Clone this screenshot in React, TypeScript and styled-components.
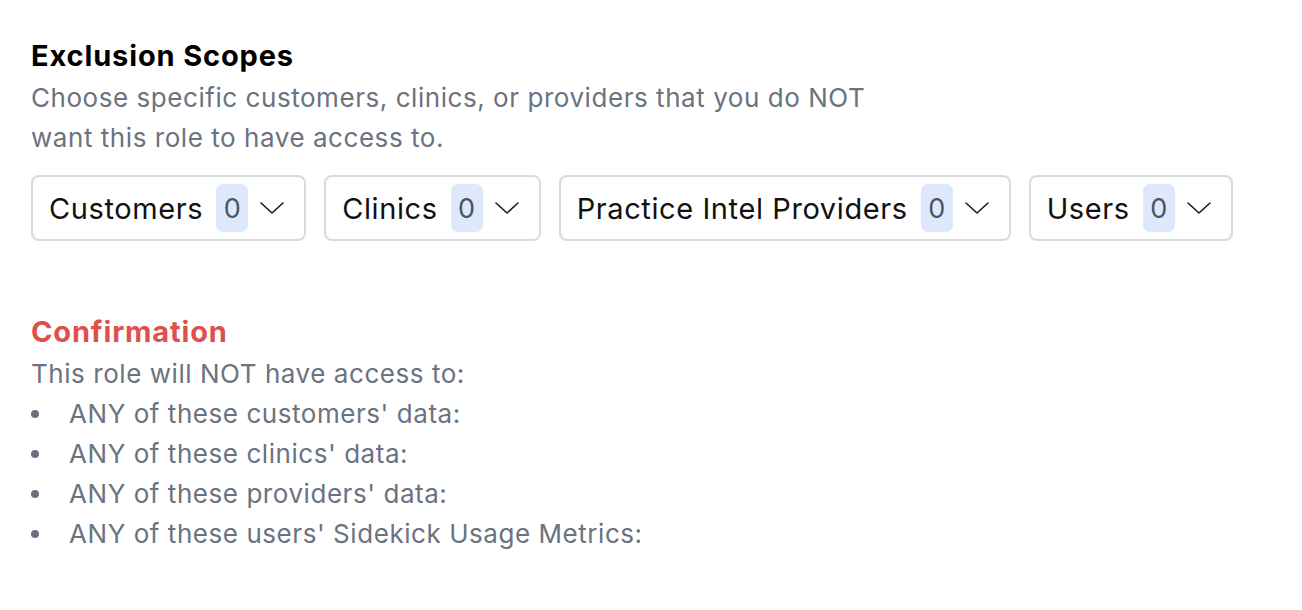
import React from "react";
import styled, { createGlobalStyle } from "styled-components";

const Global = createGlobalStyle`
  html, body { margin: 0; padding: 0; background: #ffffff; }
  body { font-family: Inter, "Noto Sans", sans-serif; -webkit-font-smoothing: antialiased; }
`;

const Page = styled.div`
  padding: 34px 31px 40px 31px;
  display: flex;
  flex-direction: column;
`;

const Section = styled.section`
  display: flex;
  flex-direction: column;
`;

const Title = styled.h2<{ $danger?: boolean }>`
  margin: 0;
  font-size: 29px;
  line-height: 44px;
  font-weight: 700;
  color: ${(p) => (p.$danger ? "#e0504a" : "#000000")};
  letter-spacing: 0.85px;
`;

const Text = styled.p`
  margin: 0;
  font-size: 26px;
  line-height: 40px;
  letter-spacing: 0.55px;
  color: #6b7280;
  max-width: 860px;
`;

const FilterRow = styled.div`
  display: flex;
  gap: 18px;
  margin-top: 17px;
  margin-bottom: 69px;
`;

const FilterButton = styled.button`
  display: flex;
  align-items: center;
  height: 66px;
  box-sizing: border-box;
  padding: 0 20px 0 16px;
  border: 2px solid #d9dadd;
  border-radius: 8px;
  background: #fff;
  font-family: inherit;
  font-size: 29px;
  color: #111111;
  cursor: pointer;
`;

const Label = styled.span`
  letter-spacing: 0.6px;
`;

const Badge = styled.span`
  margin-left: 13px;
  width: 32px;
  height: 48px;
  border-radius: 7px;
  background: #dde8fb;
  color: #4b5563;
  font-size: 27px;
  display: flex;
  align-items: center;
  justify-content: center;
`;

const Chevron = styled.svg`
  margin-left: 12px;
  width: 24px;
  height: 24px;
`;

const List = styled.ul`
  margin: 0;
  padding: 0;
  list-style: none;
`;

const Item = styled.li`
  display: flex;
  align-items: center;
  font-size: 26px;
  line-height: 40px;
  letter-spacing: 0.55px;
  color: #6b7280;
  &::before {
    content: "";
    width: 8px;
    height: 8px;
    border-radius: 50%;
    background: #6b7280;
    margin: 0 30px 0 0;
  }
`;

const filters = ["Customers", "Clinics", "Practice Intel Providers", "Users"];
const items = [
  "ANY of these customers' data:",
  "ANY of these clinics' data:",
  "ANY of these providers' data:",
  "ANY of these users' Sidekick Usage Metrics:",
];

export default function App() {
  return (
    <Page>
      <Global />
      <Section>
        <Title>Exclusion Scopes</Title>
        <Text>
          Choose specific customers, clinics, or providers that you do NOT want this role to have access to.
        </Text>
        <FilterRow>
          {filters.map((f) => (
            <FilterButton key={f}>
              <Label>{f}</Label>
              <Badge>0</Badge>
              <Chevron viewBox="0 0 24 24" fill="none" stroke="#1a1a1a" strokeWidth="1.6" strokeLinecap="round" strokeLinejoin="round">
                <path d="M1 7l11 10 11-10" />
              </Chevron>
            </FilterButton>
          ))}
        </FilterRow>
      </Section>
      <Section>
        <Title $danger>Confirmation</Title>
        <Text>This role will NOT have access to:</Text>
        <List>
          {items.map((i) => (
            <Item key={i}>{i}</Item>
          ))}
        </List>
      </Section>
    </Page>
  );
}
